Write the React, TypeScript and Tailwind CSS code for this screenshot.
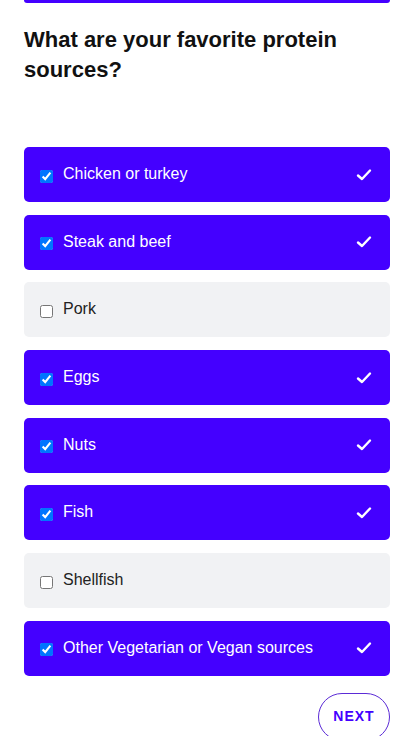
import { useState } from 'react'

const OPTIONS = [
  { label: 'Chicken or turkey', on: true },
  { label: 'Steak and beef', on: true },
  { label: 'Pork', on: false },
  { label: 'Eggs', on: true },
  { label: 'Nuts', on: true },
  { label: 'Fish', on: true },
  { label: 'Shellfish', on: false },
  { label: 'Other Vegetarian or Vegan sources', on: true },
]

function Check() {
  return (
    <svg width="16" height="14" viewBox="0 0 16 14" fill="none">
      <path d="M2 7.5 L6 11 L14 2.5" stroke="white" strokeWidth="2.4" strokeLinecap="round" strokeLinejoin="round" />
    </svg>
  )
}

export default function App() {
  const [picked, setPicked] = useState(OPTIONS.map(o => o.on))

  return (
    <div className="min-h-screen bg-white px-6 font-['Liberation_Sans',Arial,sans-serif] overflow-hidden">
      <div className="h-[3px] bg-[#4400ff] rounded-b-md" />

      <h1 className="mt-[22px] text-[22px] font-bold leading-[30px] text-[#111]">
        What are your favorite protein sources?
      </h1>

      <div className="mt-[62px] flex flex-col gap-[12.7px]">
        {OPTIONS.map((o, i) => {
          const on = picked[i]
          return (
            <label
              key={o.label}
              className={`h-[55px] rounded-[5px] flex items-center pl-4 pr-[18px] cursor-pointer ${on ? 'bg-[#4400ff] text-white' : 'bg-[#f1f2f4] text-[#222]'}`}
            >
              <input
                type="checkbox"
                checked={on}
                onChange={() => setPicked(p => p.map((v, j) => (j === i ? !v : v)))}
                className="w-[13px] h-[13px] m-0 mt-[3px]"
              />
              <span className="ml-[10px] text-[16px] -mt-[1px]">{o.label}</span>
              {on && (
                <span className="ml-auto flex items-center">
                  <Check />
                </span>
              )}
            </label>
          )
        })}
      </div>

      <div className="mt-[17px] flex justify-end">
        <button className="w-[72px] h-[48px] rounded-full border border-[#5b2bd6] text-[#4400ff] text-[14px] font-bold tracking-[1px]">
          NEXT
        </button>
      </div>
    </div>
  )
}
